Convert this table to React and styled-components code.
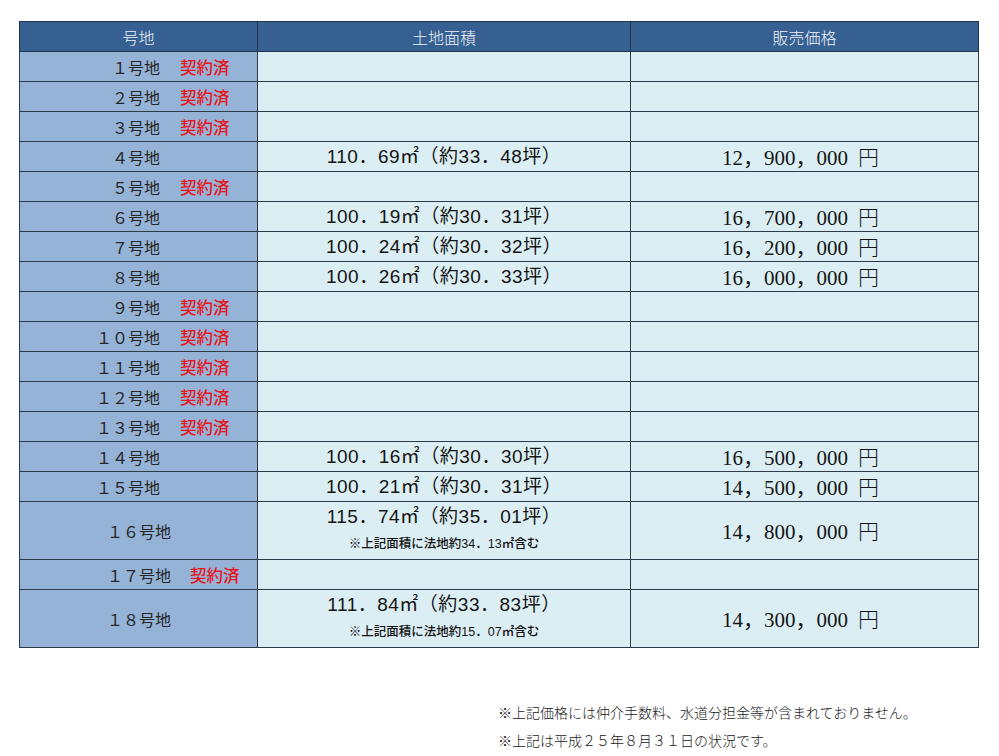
import React from "react";
import styled, { createGlobalStyle } from "styled-components";

const Global = createGlobalStyle`
  html, body { margin: 0; padding: 0; background: #ffffff; }
  body { font-family: "Noto Sans CJK JP", sans-serif; }
`;

const Page = styled.div`
  width: 999px;
  height: 756px;
  box-sizing: border-box;
  padding: 21px 0 0 19px;
  display: flex;
  flex-direction: column;
  align-items: flex-start;
  overflow: hidden;
`;

const Table = styled.table`
  width: 959px;
  border-collapse: collapse;
  table-layout: fixed;
`;

const HeadCell = styled.th`
  height: 29px;
  padding: 0;
  background: #366092;
  color: #eef2f8;
  border: 1px solid #22344a;
  font-family: "Noto Sans CJK JP", sans-serif;
  font-weight: 300;
  font-size: 16px;
  line-height: 22px;
  text-align: center;
  vertical-align: middle;
`;

const Row = styled.tr`
  height: ${(p) => p.$h}px;
`;

const LotCell = styled.td`
  padding: 0;
  height: ${(p) => p.$h}px;
  background: #95b3d7;
  border: 1px solid #2e3b4a;
  vertical-align: middle;
`;

const DataCell = styled.td`
  padding: 0;
  height: ${(p) => p.$h}px;
  background: #dbeef3;
  border: 1px solid #2e3b4a;
  text-align: center;
  vertical-align: middle;
`;

const LotLabel = styled.div`
  display: grid;
  grid-template-columns: ${(p) => (p.$shift ? 151 : 140)}px auto;
  column-gap: ${(p) => (p.$shift ? 19 : 20)}px;
  align-items: center;
  font-family: "Noto Sans CJK JP", sans-serif;
  font-size: 16px;
  line-height: 22px;
  font-weight: 400;
  color: #262626;
`;

const LotName = styled.span`
  text-align: right;
  white-space: nowrap;
`;

const Sold = styled.span`
  color: #e5161e;
  font-weight: 500;
  font-size: 16.5px;
  white-space: nowrap;
`;

const AreaStack = styled.div`
  display: flex;
  flex-direction: column;
  align-items: center;
`;

const Area = styled.div`
  font-family: "Liberation Sans", "Noto Sans CJK JP", sans-serif;
  font-size: 19px;
  letter-spacing: 0.5px;
  line-height: 26px;
  color: #151515;
  white-space: nowrap;
`;

const Note = styled.div`
  font-family: "Liberation Sans", "Noto Sans CJK JP", sans-serif;
  font-size: 12.5px;
  font-weight: 500;
  line-height: 28px;
  color: #151515;
  white-space: nowrap;
`;

const Price = styled.div`
  font-family: "Liberation Serif", "Noto Sans CJK JP", serif;
  font-size: 21px;
  line-height: 26px;
  color: #151515;
  white-space: nowrap;
  padding-right: 8px;
`;

const Yen = styled.span`
  margin-left: 10px;
  font-family: "Noto Sans CJK JP", sans-serif;
  font-weight: 300;
`;

const Notes = styled.div`
  margin: 50px 0 0 479px;
  display: flex;
  flex-direction: column;
  font-family: "Noto Sans CJK JP", sans-serif;
  font-weight: 300;
  font-size: 14px;
  line-height: 28px;
  color: #1a1a1a;
`;

const lots = [
  { n: "１", sold: true },
  { n: "２", sold: true },
  { n: "３", sold: true },
  { n: "４", area: "110．69", tsubo: "33．48", price: "12，900，000" },
  { n: "５", sold: true },
  { n: "６", area: "100．19", tsubo: "30．31", price: "16，700，000" },
  { n: "７", area: "100．24", tsubo: "30．32", price: "16，200，000" },
  { n: "８", area: "100．26", tsubo: "30．33", price: "16，000，000" },
  { n: "９", sold: true },
  { n: "１０", sold: true },
  { n: "１１", sold: true },
  { n: "１２", sold: true },
  { n: "１３", sold: true },
  { n: "１４", area: "100．16", tsubo: "30．30", price: "16，500，000" },
  { n: "１５", area: "100．21", tsubo: "30．31", price: "14，500，000" },
  { n: "１６", area: "115．74", tsubo: "35．01", price: "14，800，000", note: "34．13", shift: true },
  { n: "１７", sold: true, shift: true },
  { n: "１８", area: "111．84", tsubo: "33．83", price: "14，300，000", note: "15．07", shift: true },
];

export default function App() {
  return (
    <>
      <Global />
      <Page>
        <Table>
          <colgroup>
            <col style={{ width: 238 }} />
            <col style={{ width: 373 }} />
            <col style={{ width: 348 }} />
          </colgroup>
          <thead>
            <tr>
              <HeadCell>号地</HeadCell>
              <HeadCell>土地面積</HeadCell>
              <HeadCell>販売価格</HeadCell>
            </tr>
          </thead>
          <tbody>
            {lots.map((lot) => {
              const h = lot.note ? 57 : 29;
              return (
                <Row key={lot.n} $h={h}>
                  <LotCell $h={h}>
                    <LotLabel $shift={lot.shift}>
                      <LotName>{lot.n}号地</LotName>
                      {lot.sold ? <Sold>契約済</Sold> : <span />}
                    </LotLabel>
                  </LotCell>
                  <DataCell $h={h}>
                    {lot.area && (
                      <AreaStack>
                        <Area>{`${lot.area}㎡（約${lot.tsubo}坪）`}</Area>
                        {lot.note && <Note>{`※上記面積に法地約${lot.note}㎡含む`}</Note>}
                      </AreaStack>
                    )}
                  </DataCell>
                  <DataCell $h={h}>
                    {lot.price && (
                      <Price>
                        {lot.price}
                        <Yen>円</Yen>
                      </Price>
                    )}
                  </DataCell>
                </Row>
              );
            })}
          </tbody>
        </Table>
        <Notes>
          <span>※上記価格には仲介手数料、水道分担金等が含まれておりません。</span>
          <span>※上記は平成２５年８月３１日の状況です。</span>
        </Notes>
      </Page>
    </>
  );
}
